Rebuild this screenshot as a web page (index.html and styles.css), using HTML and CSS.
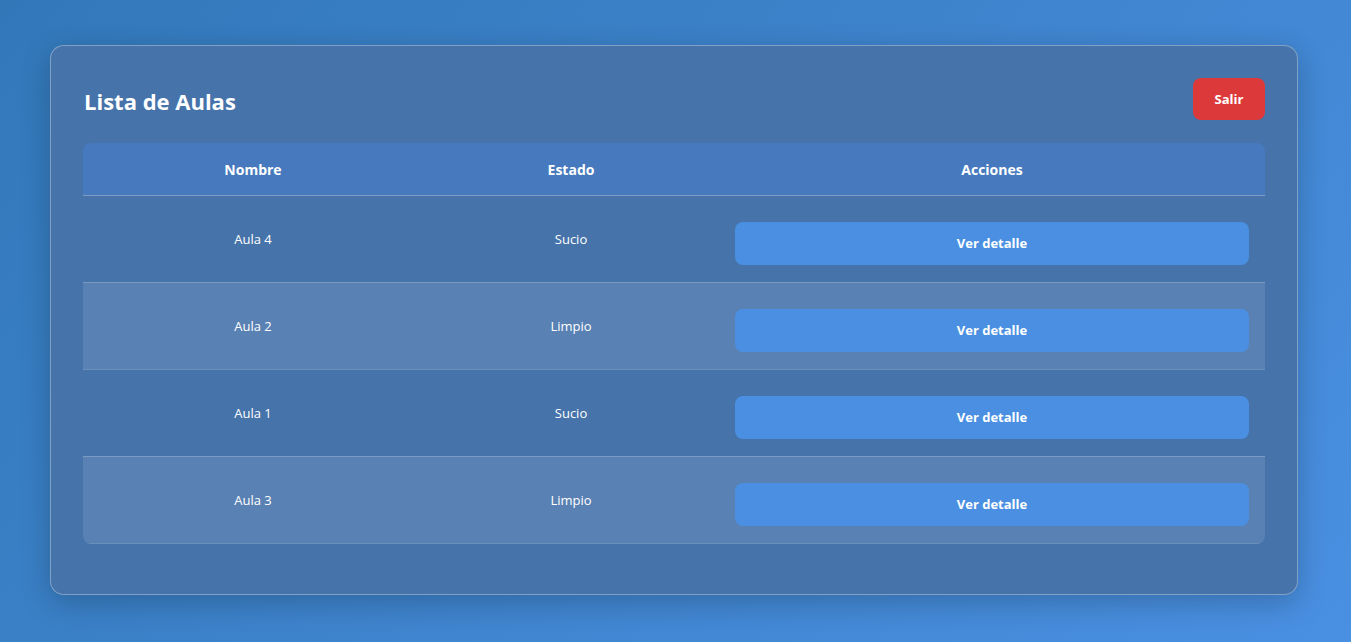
FILE: index.html
```html
<!DOCTYPE html>
<html lang="es">
<head>
<meta charset="utf-8">
<title>Lista de Aulas</title>
<link rel="stylesheet" href="styles.css">
</head>
<body>
<main class="card">
  <header class="card-header">
    <h1 class="title">Lista de Aulas</h1>
    <button class="btn-salir">Salir</button>
  </header>
  <div class="table-wrap">
    <table class="aulas">
      <colgroup>
        <col class="c1"><col class="c2"><col class="c3">
      </colgroup>
      <thead>
        <tr><th>Nombre</th><th>Estado</th><th>Acciones</th></tr>
      </thead>
      <tbody>
        <tr><td>Aula 4</td><td>Sucio</td><td><button class="btn-ver">Ver detalle</button></td></tr>
        <tr><td>Aula 2</td><td>Limpio</td><td><button class="btn-ver">Ver detalle</button></td></tr>
        <tr><td>Aula 1</td><td>Sucio</td><td><button class="btn-ver">Ver detalle</button></td></tr>
        <tr><td>Aula 3</td><td>Limpio</td><td><button class="btn-ver">Ver detalle</button></td></tr>
      </tbody>
    </table>
  </div>
</main>
</body>
</html>
```

FILE: styles.css
```css
* { box-sizing: border-box; }
html, body { height: 100%; }
body {
  margin: 0;
  padding: 45px 0 0 50px;
  font-family: "Open Sans", "Noto Sans", "Liberation Sans", sans-serif;
  color: #fff;
  background: linear-gradient(135deg, #3278b9 0%, #4a90e2 100%);
  overflow: hidden;
}
.card {
  width: 1248px;
  padding: 32px 32px 16px 32px;
  background: #4573aa;
  border: 1px solid rgba(255, 255, 255, 0.32);
  border-radius: 14px;
  box-shadow: 0 8px 30px rgba(0, 0, 0, 0.22);
}
.card-header {
  display: flex;
  align-items: center;
  justify-content: space-between;
  height: 42px;
  margin-bottom: 23px;
}
.title {
  margin: 4px 0 0 1px;
  font-size: 22px;
  font-weight: 700;
}
.btn-salir {
  width: 72px;
  height: 42px;
  border: none;
  border-radius: 8px;
  background: #dc3a3a;
  color: #fff;
  font-family: inherit;
  font-size: 13px;
  font-weight: 700;
}
.table-wrap {
  border-radius: 8px;
  overflow: hidden;
  margin-bottom: 34px;
}
.aulas {
  width: 100%;
  border-collapse: collapse;
  table-layout: fixed;
}
.c1 { width: 340px; }
.c2 { width: 296px; }
.c3 { width: 546px; }
.aulas th {
  height: 52px;
  padding: 1px 16px 0;
  background: #4679bd;
  font-size: 14px;
  font-weight: 700;
  text-align: center;
  border-bottom: 1px solid rgba(255, 255, 255, 0.3);
}
.aulas td {
  padding: 17px 16px;
  font-size: 13px;
  text-align: center;
  vertical-align: middle;
  border-bottom: 1px solid rgba(255, 255, 255, 0.2);
}
.aulas tbody tr:nth-child(even) td {
  background: #5981b3;
}
.btn-ver {
  display: block;
  width: 100%;
  height: 43px;
  margin-top: 9px;
  border: none;
  border-radius: 8px;
  background: #4a8fe1;
  color: #fff;
  font-family: inherit;
  font-size: 13px;
  font-weight: 700;
}
```
